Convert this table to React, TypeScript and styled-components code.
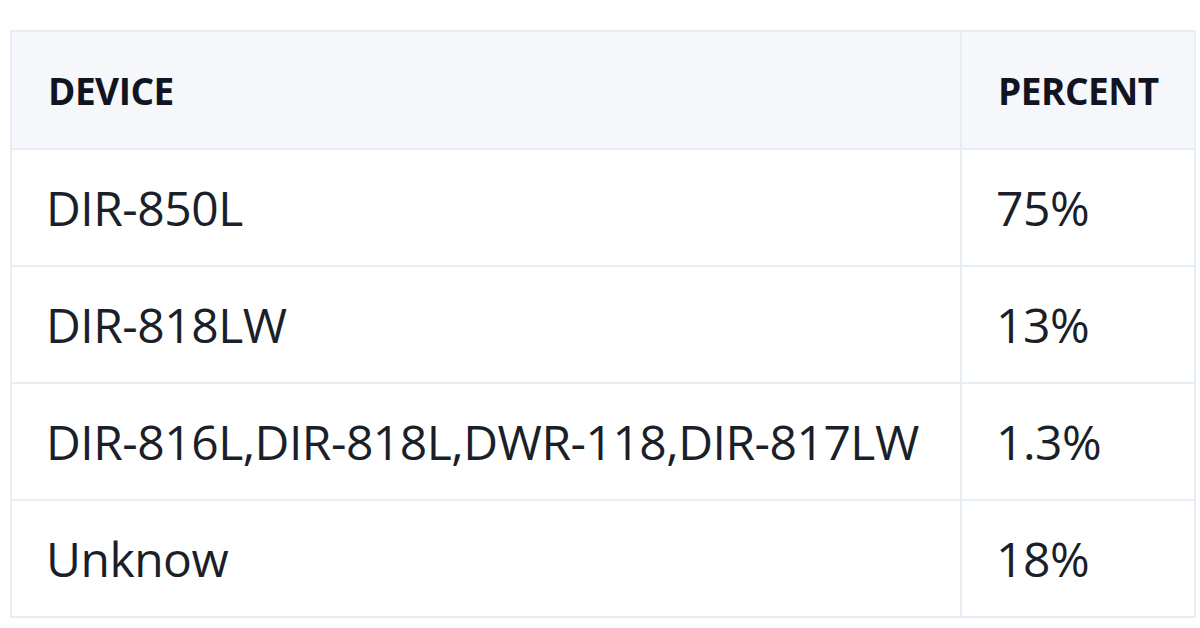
import React from "react";
import styled, { createGlobalStyle } from "styled-components";

const Global = createGlobalStyle`
  html, body { margin: 0; padding: 0; background: #ffffff; }
  body { font-family: "Open Sans", "Noto Sans", sans-serif; color: #1b1f2a; }
`;

const Page = styled.div`
  padding: 30px 4px 0 10px;
`;

const Table = styled.table`
  width: 1186px;
  border-collapse: collapse;
  table-layout: fixed;
  border: 2px solid #e6edf4;
`;

const Col = styled.col<{ $w?: number }>`
  ${(p) => (p.$w ? `width: ${p.$w}px;` : "")}
`;

const HeadCell = styled.th`
  height: 116px;
  padding: 0 0 0 36px;
  text-align: left;
  background: #f5f7fa;
  border: 2px solid #e6edf4;
  font-size: 37px;
  font-weight: 700;
  letter-spacing: -0.5px;
  color: #111522;
`;

const Cell = styled.td`
  height: 115px;
  padding: 0 0 0 34px;
  border: 2px solid #e6edf4;
  font-size: 48px;
  font-weight: 400;
  letter-spacing: -0.5px;
  color: #1b1f2a;
`;

const rows = [
  ["DIR-850L", "75%"],
  ["DIR-818LW", "13%"],
  ["DIR-816L,DIR-818L,DWR-118,DIR-817LW", "1.3%"],
  ["Unknow", "18%"],
];

export default function App() {
  return (
    <Page>
      <Global />
      <Table>
        <colgroup>
          <Col $w={950} />
          <Col />
        </colgroup>
        <thead>
          <tr>
            <HeadCell>DEVICE</HeadCell>
            <HeadCell>PERCENT</HeadCell>
          </tr>
        </thead>
        <tbody>
          {rows.map(([d, p]) => (
            <tr key={d}>
              <Cell>{d}</Cell>
              <Cell>{p}</Cell>
            </tr>
          ))}
        </tbody>
      </Table>
    </Page>
  );
}
